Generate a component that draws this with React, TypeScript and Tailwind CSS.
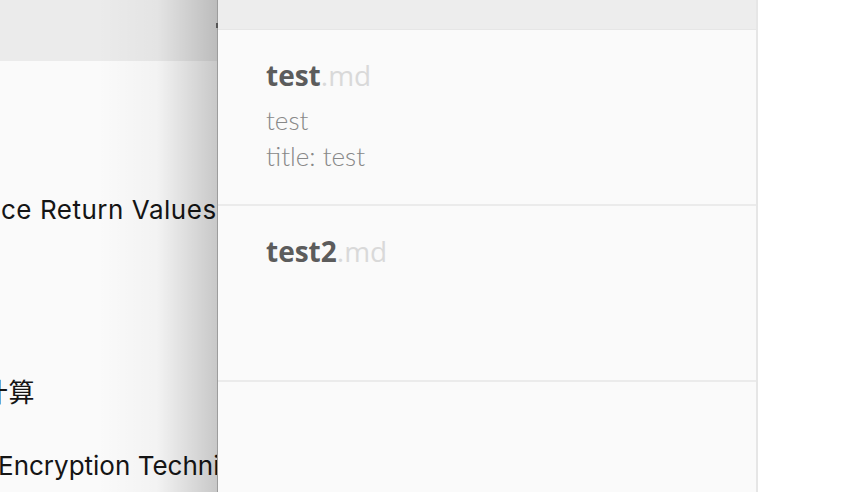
import React from "react";

const leftFont = { fontFamily: "Inter, 'Noto Sans CJK SC', sans-serif" };

function Item({ name, lines }: { name: string; lines: string[] }) {
  return (
    <div className="h-[176px] border-b-2 border-[#ebebeb] pl-[48px] pt-[27px]">
      <div className="text-[28px] leading-[36px] font-['Open_Sans',sans-serif]">
        <span className="font-bold text-[#5c5c5c]">{name}</span>
        <span className="font-normal text-[#d9d9d9]">.md</span>
      </div>
      <div className="mt-[9px] text-[26px] leading-[36px] font-light text-[#888888] font-['Lato',sans-serif]">
        {lines.map((l) => (
          <div key={l}>{l}</div>
        ))}
      </div>
    </div>
  );
}

export default function App() {
  return (
    <div className="flex h-[492px] w-[842px] overflow-hidden bg-white">
      <div className="relative w-[217px] shrink-0 overflow-hidden bg-[#fafafa]">
        <div className="h-[61px] bg-[#ebebeb]" />
        <div
          className="flex flex-col whitespace-nowrap pl-[1px] text-[26px] leading-[30px] tracking-[0.02em] text-[#151515]"
          style={leftFont}
        >
          <div className="mt-[134px]">ce Return Values</div>
          <div className="mt-[153px] -ml-[19px]">计算</div>
          <div className="mt-[43px] -ml-[3px] tracking-normal">Encryption Techniques</div>
        </div>
        <div className="pointer-events-none absolute inset-y-0 right-0 w-[120px] bg-gradient-to-r from-transparent via-black/[0.03] to-black/[0.2]" />
      </div>
      <div className="relative w-[541px] shrink-0 border-l border-l-[#9c9c9c] border-r-2 border-r-[#e6e6e6] bg-[#fafafa]">
        <div className="absolute -left-[2px] top-[23px] h-[5px] w-[2px] bg-[#555]" />
        <div className="h-[30px] border-b border-[#e6e6e6] bg-[#ededed]" />
        <Item name="test" lines={["test", "title: test"]} />
        <Item name="test2" lines={[]} />
      </div>
      <div className="flex-1 bg-white" />
    </div>
  );
}
